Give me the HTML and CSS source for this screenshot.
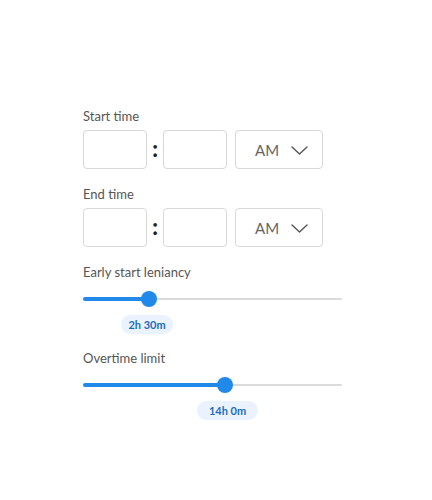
FILE: index.html
```html
<!DOCTYPE html>
<html>
<head>
<meta charset="utf-8">
<link rel="stylesheet" href="styles.css">
</head>
<body>
<div class="form">
  <div class="label">Start time</div>
  <div class="time-row">
    <div class="box"></div>
    <div class="colon">:</div>
    <div class="box"></div>
    <div class="select"><span>AM</span>
      <svg width="17" height="9" viewBox="0 0 17 9"><path d="M1 1 L8.5 8 L16 1" fill="none" stroke="#555" stroke-width="1.4" stroke-linecap="round" stroke-linejoin="round"/></svg>
    </div>
  </div>

  <div class="label sp">End time</div>
  <div class="time-row">
    <div class="box"></div>
    <div class="colon">:</div>
    <div class="box"></div>
    <div class="select"><span>AM</span>
      <svg width="17" height="9" viewBox="0 0 17 9"><path d="M1 1 L8.5 8 L16 1" fill="none" stroke="#555" stroke-width="1.4" stroke-linecap="round" stroke-linejoin="round"/></svg>
    </div>
  </div>

  <div class="label sp">Early start leniancy</div>
  <div class="slider">
    <div class="track"></div>
    <div class="fill" style="width:66px"></div>
    <div class="thumb" style="left:58px"></div>
  </div>
  <div class="badge-row"><span class="badge" style="margin-left:38px;width:52px">2h 30m</span></div>

  <div class="label sp2">Overtime limit</div>
  <div class="slider">
    <div class="track"></div>
    <div class="fill" style="width:142px"></div>
    <div class="thumb" style="left:134px"></div>
  </div>
  <div class="badge-row"><span class="badge" style="margin-left:114px;width:61px">14h 0m</span></div>
</div>
</body>
</html>
```
FILE: styles.css
```css
html, body {
  margin: 0;
  padding: 0;
  background: #fff;
}
body {
  font-family: Lato, "Open Sans", sans-serif;
  width: 432px;
  height: 500px;
}
.form {
  padding: 108px 0 0 83px;
  width: 259px;
}
.label {
  font-size: 13px;
  line-height: 16px;
  height: 16px;
  color: #555;
  margin-bottom: 6px;
}
.label.sp { margin-top: 17px; }
.label.sp2 { margin-top: 16px; }
.time-row {
  display: flex;
  align-items: center;
  height: 39px;
}
.box {
  width: 64px;
  height: 39px;
  box-sizing: border-box;
  border: 1px solid #d8d8d8;
  border-radius: 4px;
}
.colon {
  width: 16px;
  text-align: center;
  font-size: 22px;
  font-weight: 900;
  color: #222;
  line-height: 39px;
  position: relative;
  top: -1px;
}
.select {
  margin-left: 8px;
  width: 88px;
  height: 39px;
  box-sizing: border-box;
  border: 1px solid #d8d8d8;
  border-radius: 4px;
  display: flex;
  align-items: center;
  padding-left: 19px;
  color: #666;
  font-size: 15px;
}
.select span { width: 36px; }
.select svg { display: block; margin-top: 1px; }
.slider {
  position: relative;
  height: 24px;
  margin-top: 7px;
}
.track {
  position: absolute;
  left: 0;
  right: 0;
  top: 11px;
  height: 2px;
  background: #dadada;
  border-radius: 1px;
}
.fill {
  position: absolute;
  left: 0;
  top: 10px;
  height: 4px;
  background: #2189ea;
  border-radius: 2px;
}
.thumb {
  position: absolute;
  top: 4px;
  width: 16px;
  height: 16px;
  border-radius: 50%;
  background: #2189ea;
}
.badge-row {
  margin-top: 4px;
  height: 19px;
  display: flex;
}
.badge {
  display: inline-block;
  box-sizing: border-box;
  height: 19px;
  line-height: 19px;
  text-align: center;
  border-radius: 10px;
  background: #eaf3fd;
  color: #1b6cc0;
  font-size: 11px;
  font-weight: 700;
}
```
